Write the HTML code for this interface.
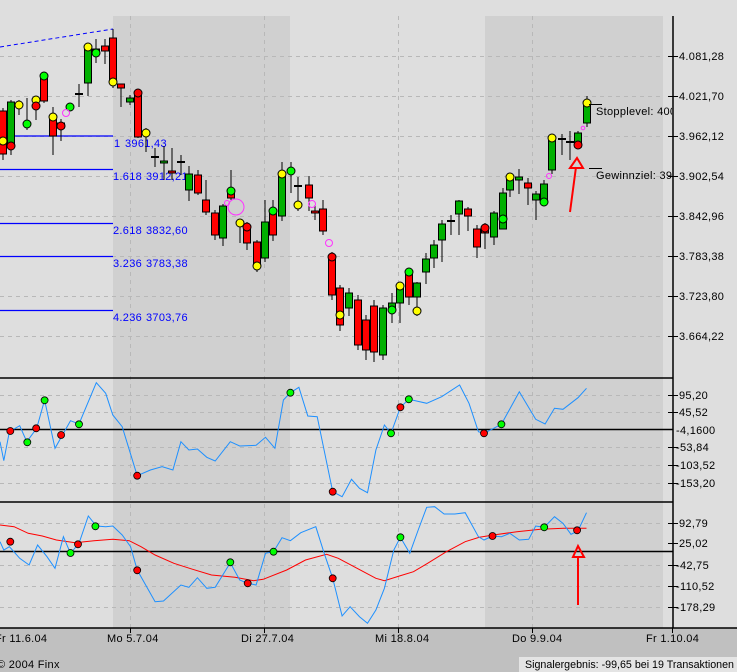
<!DOCTYPE html>
<html><head><meta charset="utf-8"><style>
html,body{margin:0;padding:0;background:#dedede;}
svg{display:block;font-family:"Liberation Sans",sans-serif;}
</style></head><body>
<svg width="737" height="672" viewBox="0 0 737 672" xmlns="http://www.w3.org/2000/svg">
<rect x="0" y="0" width="737" height="672" fill="#dedede"/>
<rect x="113" y="16" width="177" height="612" fill="#d0d0d0"/>
<rect x="485" y="16" width="178" height="612" fill="#d0d0d0"/>
<rect x="0" y="628" width="737" height="44" fill="#c0c0c0"/>
<g stroke="#b8b8b8" stroke-dasharray="4,4" stroke-width="1">
<line x1="130.5" y1="16" x2="130.5" y2="628"/><line x1="264.5" y1="16" x2="264.5" y2="628"/>
<line x1="398.5" y1="16" x2="398.5" y2="628"/><line x1="532.5" y1="16" x2="532.5" y2="628"/>
<line x1="0" y1="56.5" x2="662" y2="56.5"/><line x1="0" y1="96.5" x2="662" y2="96.5"/>
<line x1="0" y1="136.5" x2="662" y2="136.5"/><line x1="0" y1="176.5" x2="662" y2="176.5"/>
<line x1="0" y1="216.5" x2="662" y2="216.5"/><line x1="0" y1="256.5" x2="662" y2="256.5"/>
<line x1="0" y1="296.5" x2="662" y2="296.5"/><line x1="0" y1="336.5" x2="662" y2="336.5"/>
<line x1="0" y1="395.5" x2="662" y2="395.5"/><line x1="0" y1="412.5" x2="662" y2="412.5"/>
<line x1="0" y1="447.5" x2="662" y2="447.5"/><line x1="0" y1="465.5" x2="662" y2="465.5"/>
<line x1="0" y1="483.5" x2="662" y2="483.5"/>
<line x1="0" y1="523.5" x2="662" y2="523.5"/><line x1="0" y1="565.5" x2="662" y2="565.5"/>
<line x1="0" y1="586.5" x2="662" y2="586.5"/><line x1="0" y1="607.5" x2="662" y2="607.5"/>
</g>
<g stroke="#000" stroke-width="1.5">
<line x1="0" y1="378" x2="673" y2="378"/><line x1="0" y1="502" x2="673" y2="502"/>
<line x1="0" y1="628" x2="737" y2="628"/>
<line x1="0" y1="429.5" x2="673" y2="429.5"/><line x1="0" y1="551.5" x2="673" y2="551.5"/>
<line x1="673" y1="16" x2="673" y2="628"/>
</g>
<g stroke="#000"><line x1="668" y1="56.5" x2="678" y2="56.5"/><line x1="668" y1="96.5" x2="678" y2="96.5"/><line x1="668" y1="136.5" x2="678" y2="136.5"/><line x1="668" y1="176.5" x2="678" y2="176.5"/><line x1="668" y1="216.5" x2="678" y2="216.5"/><line x1="668" y1="256.5" x2="678" y2="256.5"/><line x1="668" y1="296.5" x2="678" y2="296.5"/><line x1="668" y1="336.5" x2="678" y2="336.5"/>
<line x1="668" y1="395.5" x2="678" y2="395.5"/><line x1="668" y1="412.5" x2="678" y2="412.5"/><line x1="668" y1="447.5" x2="678" y2="447.5"/><line x1="668" y1="465.5" x2="678" y2="465.5"/><line x1="668" y1="483.5" x2="678" y2="483.5"/>
<line x1="668" y1="523.5" x2="678" y2="523.5"/><line x1="668" y1="543.5" x2="678" y2="543.5"/><line x1="668" y1="565.5" x2="678" y2="565.5"/><line x1="668" y1="586.5" x2="678" y2="586.5"/><line x1="668" y1="607.5" x2="678" y2="607.5"/>
<line x1="130.5" y1="628" x2="130.5" y2="633"/><line x1="264.5" y1="628" x2="264.5" y2="633"/><line x1="398.5" y1="628" x2="398.5" y2="633"/><line x1="532.5" y1="628" x2="532.5" y2="633"/><line x1="672.5" y1="628" x2="672.5" y2="633"/></g>
<g font-size="11" fill="#000" letter-spacing="0.3">
<text x="679" y="60">4.081,28</text><text x="679" y="100">4.021,70</text><text x="679" y="140">3.962,12</text><text x="679" y="180">3.902,54</text><text x="679" y="220">3.842,96</text><text x="679" y="260">3.783,38</text><text x="679" y="300">3.723,80</text><text x="679" y="340">3.664,22</text>
<text x="679" y="399">95,20</text><text x="679" y="416">45,52</text><text x="676" y="434">-4,1600</text><text x="676" y="451">-53,84</text><text x="676" y="469">-103,52</text><text x="676" y="487">-153,20</text>
<text x="679" y="527">92,79</text><text x="679" y="547">25,02</text><text x="676" y="569">-42,75</text><text x="676" y="590">-110,52</text><text x="676" y="611">-178,29</text>
<text x="-5" y="642">Fr 11.6.04</text><text x="107" y="642">Mo 5.7.04</text><text x="241" y="642">Di 27.7.04</text><text x="375" y="642">Mi 18.8.04</text><text x="512" y="642">Do 9.9.04</text><text x="646" y="642">Fr 1.10.04</text>
<text x="-3" y="668">© 2004 Finx</text>
</g>
<rect x="519" y="657" width="218" height="15" fill="#e4e4e4"/>
<text x="525" y="668" font-size="11" textLength="209" lengthAdjust="spacingAndGlyphs">Signalergebnis: -99,65 bei 19 Transaktionen</text>
<line x1="0" y1="47" x2="113" y2="29" stroke="#0000ff" stroke-dasharray="4,3"/>
<g stroke="#0000ff" stroke-width="1.2"><line x1="0" y1="136" x2="113" y2="136"/><line x1="0" y1="169.5" x2="113" y2="169.5"/><line x1="0" y1="223.5" x2="113" y2="223.5"/><line x1="0" y1="256.5" x2="113" y2="256.5"/><line x1="0" y1="310.5" x2="113" y2="310.5"/></g>
<g font-size="11" fill="#0000ff" letter-spacing="0.3"><text x="114" y="147">1</text><text x="125" y="147">3961,43</text><text x="113" y="180">1.618</text><text x="146" y="180">3912,21</text><text x="113" y="234">2.618</text><text x="146" y="234">3832,60</text><text x="113" y="267">3.236</text><text x="146" y="267">3783,38</text><text x="113" y="321">4.236</text><text x="146" y="321">3703,76</text></g>
<g stroke="#000" stroke-width="1">
<path d="M3,108V160M11,100V155M19,100V115M27,98V130M36,98V120M44,74V103M53,107V155M61,119V141M79,84V107M88,44V96M96,39V63M105,39V64M113,29V88M121,84V107M130,95V105M138,90V138M146,128V152M155,148V167M164,146V180M172,148V180M181,155V175M189,166V201M198,170V195M206,180V215M215,210V240M223,204V246M231,170V200M240,220V243M247,222V250M257,240V272M265,200V262M273,200V241M282,162V221M291,162V193M298,177V211M309,176V211M315,205V220M323,200V235M332,252V300M340,285V331M349,288V316M358,295V350M366,315V360M374,300V362M383,305V360M392,293V323M400,284V323M409,268V305M417,282V316M426,253V284M434,240V268M442,220V262M451,215V235M459,200V235M468,207V231M477,225V258M485,223V249M494,211V245M503,188V229M510,175V197M519,169V194M528,178V205M536,191V220M544,180V205M552,135V174M562,134V155M570,131V160M578,131V149M587,96V127"/>
<g fill="#ff0000">
<rect x="-0.5" y="111" width="7" height="43"/><rect x="40.5" y="77" width="7" height="24"/><rect x="49.5" y="117" width="7" height="19"/><rect x="57.5" y="123" width="7" height="5"/><rect x="101.5" y="46" width="7" height="5"/><rect x="109.5" y="38" width="7" height="45"/><rect x="117.5" y="84" width="7" height="4"/><rect x="134.5" y="93" width="7" height="44"/><rect x="168.5" y="171" width="7" height="2"/><rect x="194.5" y="175" width="7" height="18"/><rect x="202.5" y="200" width="7" height="12"/><rect x="211.5" y="213" width="7" height="22"/><rect x="227.5" y="191" width="7" height="7"/><rect x="243.5" y="227" width="7" height="16"/><rect x="253.5" y="242" width="7" height="23"/><rect x="269.5" y="211" width="7" height="24"/><rect x="305.5" y="185" width="7" height="13"/><rect x="311.5" y="211" width="7" height="2"/><rect x="319.5" y="209" width="7" height="22"/><rect x="328.5" y="257" width="7" height="38"/><rect x="336.5" y="288" width="7" height="37"/><rect x="354.5" y="300" width="7" height="45"/><rect x="362.5" y="320" width="7" height="30"/><rect x="370.5" y="306" width="7" height="46"/><rect x="405.5" y="272" width="7" height="25"/><rect x="464.5" y="209" width="7" height="7"/><rect x="473.5" y="229" width="7" height="18"/><rect x="481.5" y="229" width="7" height="4"/><rect x="524.5" y="183" width="7" height="5"/>
</g>
<g fill="#00b000">
<rect x="7.5" y="102" width="7" height="44"/><rect x="84.5" y="47" width="7" height="36"/><rect x="92.5" y="49" width="7" height="4"/><rect x="126.5" y="98" width="7" height="4"/><rect x="160.5" y="161" width="7" height="2"/><rect x="185.5" y="174" width="7" height="16"/><rect x="219.5" y="206" width="7" height="32"/><rect x="261.5" y="222" width="7" height="36"/><rect x="278.5" y="174" width="7" height="42"/><rect x="345.5" y="293" width="7" height="15"/><rect x="379.5" y="308" width="7" height="47"/><rect x="388.5" y="303" width="7" height="7"/><rect x="396.5" y="287" width="7" height="16"/><rect x="413.5" y="283" width="7" height="14"/><rect x="422.5" y="259" width="7" height="13"/><rect x="430.5" y="245" width="7" height="13"/><rect x="438.5" y="224" width="7" height="16"/><rect x="455.5" y="201" width="7" height="13"/><rect x="490.5" y="213" width="7" height="24"/><rect x="499.5" y="193" width="7" height="36"/><rect x="506.5" y="177" width="7" height="13"/><rect x="515.5" y="177" width="7" height="3"/><rect x="532.5" y="194" width="7" height="6"/><rect x="540.5" y="184" width="7" height="16"/><rect x="548.5" y="138" width="7" height="32"/><rect x="574.5" y="133" width="7" height="14"/><rect x="583.5" y="103" width="7" height="20"/>
</g>
<path d="M75,94H83M151,157H159M177,162H185M294,186H302M447,221H455M558,139H566M566,142H574" stroke-width="2"/>
<g fill="#ffff00"><circle cx="3" cy="141" r="4"/><circle cx="19" cy="105" r="4"/><circle cx="36" cy="100" r="4"/><circle cx="53" cy="117" r="4"/><circle cx="88" cy="47" r="4"/><circle cx="113" cy="82" r="4"/><circle cx="146" cy="133" r="4"/><circle cx="240" cy="223" r="4"/><circle cx="257" cy="266" r="4"/><circle cx="282" cy="174" r="4"/><circle cx="298" cy="205" r="4"/><circle cx="340" cy="315" r="4"/><circle cx="400" cy="286" r="4"/><circle cx="417" cy="311" r="4"/><circle cx="510" cy="177" r="4"/><circle cx="552" cy="138" r="4"/><circle cx="587" cy="103" r="4"/></g>
<g fill="#00ff00"><circle cx="27" cy="124" r="4"/><circle cx="44" cy="76" r="4"/><circle cx="70" cy="107" r="4"/><circle cx="96" cy="53" r="4"/><circle cx="231" cy="191" r="4"/><circle cx="273" cy="211" r="4"/><circle cx="291" cy="171" r="4"/><circle cx="392" cy="310" r="4"/><circle cx="409" cy="272" r="4"/><circle cx="503" cy="219" r="4"/><circle cx="544" cy="202" r="4"/></g>
<g fill="#ff0000"><circle cx="11" cy="146" r="4"/><circle cx="36" cy="106" r="4"/><circle cx="61" cy="126" r="4"/><circle cx="138" cy="93" r="4"/><circle cx="247" cy="227" r="4"/><circle cx="332" cy="257" r="4"/><circle cx="485" cy="228" r="4"/><circle cx="578" cy="145" r="4"/></g>
</g>
<g fill="none" stroke="#ff33ff"><circle cx="66" cy="113" r="3.5"/><circle cx="236" cy="207" r="8"/><circle cx="227" cy="203" r="2.5"/><circle cx="312" cy="204" r="3.5"/><circle cx="329" cy="243" r="3.5"/><circle cx="549" cy="176" r="2.5"/><circle cx="583" cy="128" r="1.8"/></g>
<g stroke="#000"><line x1="589" y1="104.5" x2="602" y2="104.5"/><line x1="589" y1="168.5" x2="602" y2="168.5"/></g>
<svg x="0" y="0" width="672" height="672" overflow="hidden"><g font-size="11" letter-spacing="0.3"><text x="596" y="115">Stopplevel: 4009</text><text x="596" y="179">Gewinnziel: 3913</text></g></svg>
<g stroke="#ff0000" stroke-width="2" fill="none"><path d="M570,212L576,167"/><path d="M577,158L570,168H583Z"/>
<path d="M578,605V557"/><path d="M578,546L573,557H584Z"/></g>
<polyline fill="none" stroke="#1e90ff" stroke-width="1" points="0,441.7 3.8,460.7 9.4,431.7 19.7,425.7 26.8,441.7 36.7,428.3 44.6,400 55,448.3 70.5,420.7 79,424 96.3,382.7 105.7,393.3 112.8,415 122.2,426.7 137.2,475.7 150.4,470 162.1,466.7 172.9,470 180.9,441.7 188.9,450 197.4,449 206.8,457.3 215.2,461 230.3,441.7 239.7,446 256.1,445.3 265.5,437.3 274.9,448.3 283.4,400 290.4,392.7 298.9,387.3 307.8,416 317.2,416.7 332.7,491.7 342.1,496.7 351.5,479.3 359.5,488.3 367.5,492.7 375.9,450 384.4,425 391,433.3 400.4,407.3 408.8,399.3 426.7,403.3 441.7,396.7 459.6,385 469,403.3 478.4,431.7 484,433.3 501.4,424.3 519.3,391.7 535.7,419.3 545.1,424 554.5,408.3 563,409.3 578,397.7 586.5,388.3"/>
<polyline fill="none" stroke="#ff0000" stroke-width="1" points="0,525 14.1,526.7 28.2,533.3 42.3,536 56.4,540 75.2,542.7 94,540.7 112.8,539.3 129.2,540.7 141,546.7 155.1,555 173.9,563.3 192.7,569.3 211.5,575 235,577.3 253.8,580.7 263.2,579.3 286.7,570 305.5,560 326.6,554.3 338.3,558.3 357.1,568.3 375.9,578.3 384.4,580.7 399.4,576 413.5,571.7 427.6,563.3 446.4,551.7 465.2,541.7 479.3,537.3 493.4,535 516.9,531.7 540.4,529.3 563.9,528.3 586.5,528.3"/>
<polyline fill="none" stroke="#1e90ff" stroke-width="1" points="0,541.7 3.8,550 9.4,546.7 19.7,558.3 29.1,565 37.6,545 47,556.7 55,568.3 63.4,536.7 70.5,553.3 79,543.3 88.3,516 96.3,526 105.7,526.7 112.8,526 122.2,535 130.6,546.7 137.2,570 155.1,601.7 163.5,601 180.9,585 188.9,587.3 197.4,577.7 206.8,588.3 215.2,587.3 230.3,562.7 239.7,580 247.7,583.3 256.1,585 265.5,553.3 273.5,551.7 282,537.7 290.4,540.7 300.8,532.7 315.8,526.7 324.2,553.3 332.7,578.3 342.1,616 350.1,606.7 359.5,616.7 367.5,623.3 375.9,610 384.4,588.3 393.8,550 400.4,537.3 409.8,553.3 418.2,530 426.7,507.3 434.7,506.7 444.1,514 454.9,514 465.2,512.7 478.4,536.7 484,540 492.5,536 501.4,536.7 509.9,533.3 519.3,540 528.7,539.3 535.7,526 544.2,527.3 554.5,516.7 563,523.3 571,534.3 578,530.7 586.5,512.7"/>
<g stroke="#000" stroke-width="0.8">
<g fill="#ff0000"><circle cx="10.3" cy="431" r="3.5"/><circle cx="36.2" cy="428.3" r="3.5"/><circle cx="61.1" cy="435" r="3.5"/><circle cx="137.2" cy="475.7" r="3.5"/><circle cx="332.7" cy="491.7" r="3.5"/><circle cx="400.4" cy="407.3" r="3.5"/><circle cx="484" cy="433.3" r="3.5"/>
<circle cx="10.3" cy="541.7" r="3.5"/><circle cx="78" cy="544.3" r="3.5"/><circle cx="137.2" cy="570.3" r="3.5"/><circle cx="247.7" cy="583.3" r="3.5"/><circle cx="332.7" cy="578.3" r="3.5"/><circle cx="492.5" cy="536" r="3.5"/><circle cx="577.1" cy="530.3" r="3.5"/></g>
<g fill="#00ff00"><circle cx="27.3" cy="442.3" r="3.5"/><circle cx="44.6" cy="400.3" r="3.5"/><circle cx="79" cy="424.3" r="3.5"/><circle cx="290.4" cy="392.7" r="3.5"/><circle cx="391" cy="433.3" r="3.5"/><circle cx="408.8" cy="399.3" r="3.5"/><circle cx="501.4" cy="424.3" r="3.5"/>
<circle cx="70.5" cy="553" r="3.5"/><circle cx="95.4" cy="526.3" r="3.5"/><circle cx="230.3" cy="562.3" r="3.5"/><circle cx="273.5" cy="551.7" r="3.5"/><circle cx="400.4" cy="537.3" r="3.5"/><circle cx="544.2" cy="527.3" r="3.5"/></g>
</g>
</svg>
</body></html>
